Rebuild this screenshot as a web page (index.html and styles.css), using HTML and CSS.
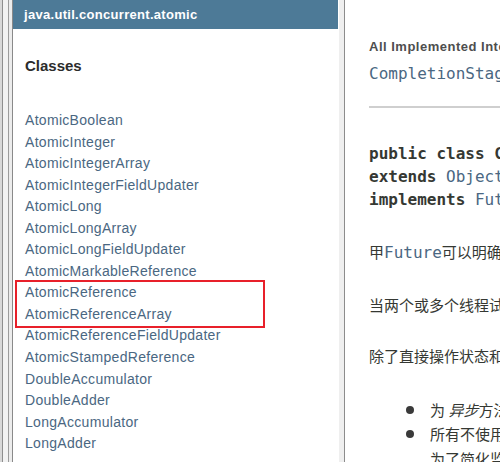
FILE: index.html
```html
<!DOCTYPE html>
<html lang="zh">
<head>
<meta charset="utf-8">
<title>CompletableFuture</title>
<link rel="stylesheet" href="styles.css">
</head>
<body>
<div class="frame">
  <div class="frame-edge"></div>
  <nav class="left">
    <div class="pkg-bar">java.util.concurrent.atomic</div>
    <h2 class="title">Classes</h2>
    <ul class="classes">
      <li><a href="#">AtomicBoolean</a></li>
      <li><a href="#">AtomicInteger</a></li>
      <li><a href="#">AtomicIntegerArray</a></li>
      <li><a href="#">AtomicIntegerFieldUpdater</a></li>
      <li><a href="#">AtomicLong</a></li>
      <li><a href="#">AtomicLongArray</a></li>
      <li><a href="#">AtomicLongFieldUpdater</a></li>
      <li><a href="#">AtomicMarkableReference</a></li>
      <li><a href="#">AtomicReference</a></li>
      <li><a href="#">AtomicReferenceArray</a></li>
      <li><a href="#">AtomicReferenceFieldUpdater</a></li>
      <li><a href="#">AtomicStampedReference</a></li>
      <li><a href="#">DoubleAccumulator</a></li>
      <li><a href="#">DoubleAdder</a></li>
      <li><a href="#">LongAccumulator</a></li>
      <li><a href="#">LongAdder</a></li>
    </ul>
  </nav>
  <div class="splitter"></div>
  <main class="right">
    <div class="dt">All Implemented Interfaces:</div>
    <div class="dd"><a href="#">CompletionStage</a>&lt;T&gt;, <a href="#">Future</a>&lt;T&gt;</div>
    <div class="rule"></div>
    <pre class="sig"><b>public class CompletableFuture&lt;T&gt;</b>
<b>extends</b> <a href="#">Object</a>
<b>implements</b> <a href="#">Future</a>&lt;T&gt;, <a href="#">CompletionStage</a>&lt;T&gt;</pre>
    <p class="para p1">甲<code>Future</code>可以明确完成（设定其值和状态），并且可以被用作<code>CompletionStage</code>，支持有依赖的函数和在其完成时触发的动作。</p>
    <p class="para p2">当两个或多个线程试图<code>complete</code>，<code>completeExceptionally</code>，或<code>cancel</code>一个CompletableFuture，只有其中之一成功。</p>
    <p class="para p3">除了直接操作状态和结果的这些和相关方法外，CompletableFuture还通过以下策略实现接口<code>CompletionStage</code>：</p>
    <ul class="rules">
      <li><span class="line">为 <i>异步</i>方法的非异步方法提供的动作可以由完成当前CompletableFuture的线程执行。</span></li>
      <li><span class="line">所有不使用显式Executor参数的异步方法都使用<code>ForkJoinPool.commonPool()</code>执行</span><span class="line">为了简化监视，调试和跟踪，所有生成的异步任务都是标记接口的实例。</span></li>
    </ul>
  </main>
</div>
<div class="mark" aria-hidden="true"></div>
</body>
</html>
```
FILE: styles.css
```css
html, body {
  margin: 0;
  padding: 0;
  background: #ffffff;
  overflow: hidden;
}
body {
  width: 500px;
  height: 462px;
  position: relative;
}
.frame {
  display: flex;
  height: 462px;
}
.frame-edge {
  flex: 0 0 13px;
  background: linear-gradient(to right,
    #d8d8d8 0, #d8d8d8 2px,
    #8e8e8e 2px, #8e8e8e 3px,
    #f2f2f2 3px, #f2f2f2 8px,
    #9c9c9c 8px, #9c9c9c 9px,
    #ececec 9px, #ececec 12px,
    #8a8a8a 12px, #8a8a8a 13px);
}
.left {
  flex: 0 0 325px;
  font-family: "Liberation Sans", Arial, sans-serif;
  overflow: hidden;
}
.pkg-bar {
  height: 29px;
  background: #4d7a97;
  color: #ffffff;
  font-weight: bold;
  font-size: 13px;
  letter-spacing: 0.3px;
  line-height: 30px;
  padding-left: 11px;
}
.title {
  margin: 27px 0 0 12px;
  font-size: 15px;
  line-height: 20px;
  font-weight: bold;
  color: #2c2c2c;
}
.classes {
  list-style: none;
  margin: 34px 0 0 0;
  padding: 0 0 0 12px;
}
.classes li {
  font-size: 14px;
  letter-spacing: 0.3px;
  line-height: 21.55px;
  white-space: nowrap;
}
.classes a {
  color: #4a6782;
  text-decoration: none;
}
.splitter {
  flex: 0 0 7px;
  background: linear-gradient(to right,
    #ffffff 0, #ffffff 1px,
    #efefef 1px, #efefef 6px,
    #8c8c8c 6px, #8c8c8c 7px);
}
.right {
  flex: 1 1 auto;
  min-width: 0;
  padding: 39px 0 0 24px;
  overflow: hidden;
  white-space: nowrap;
}
.right a {
  color: #4a6782;
  text-decoration: none;
}
.dt {
  font-family: "Liberation Sans", Arial, sans-serif;
  font-weight: bold;
  font-size: 13px;
  letter-spacing: 0.5px;
  line-height: 16px;
  color: #4e4e4e;
}
.dd {
  margin-top: 9px;
  font-family: "DejaVu Sans Mono", monospace;
  font-size: 16px;
  line-height: 20px;
  color: #353833;
}
.rule {
  margin-top: 22px;
  height: 2px;
  background: #cfcfcf;
  width: 400px;
}
.sig {
  margin: 34px 0 0 0;
  font-family: "DejaVu Sans Mono", monospace;
  font-size: 16px;
  line-height: 23px;
  color: #353833;
}
.sig b {
  font-weight: bold;
}
.para {
  margin: 0;
  font-family: "Noto Sans CJK SC", sans-serif;
  font-size: 15px;
  line-height: 22px;
  color: #353833;
}
.para code, .rules code {
  font-family: "DejaVu Sans Mono", monospace;
  font-size: 16px;
  color: #4a6782;
}
.p1 { margin-top: 30px; }
.p2 { margin-top: 30px; }
.p3 { margin-top: 28px; }
.rules {
  margin: 30px 0 0 0;
  padding: 0 0 0 61px;
  list-style: none;
  font-family: "Noto Sans CJK SC", sans-serif;
  font-size: 15px;
  line-height: 24px;
  color: #353833;
}
.rules li {
  position: relative;
}
.rules li::before {
  content: "";
  position: absolute;
  left: -24px;
  top: 8px;
  width: 8px;
  height: 8px;
  border-radius: 50%;
  background: #3a3a3a;
}
.rules .line {
  display: block;
}
.mark {
  position: absolute;
  left: 15px;
  top: 280px;
  width: 250px;
  height: 48px;
  box-sizing: border-box;
  border: 2px solid #e8202a;
}
```
